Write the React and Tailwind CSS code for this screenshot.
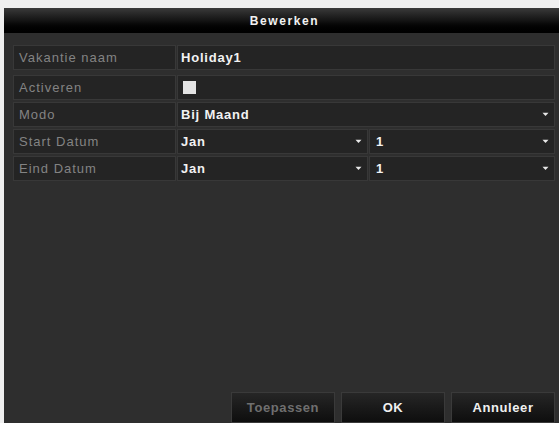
import React from "react";

const font = { fontFamily: '"Liberation Sans", Arial, sans-serif' };

function Chevron() {
  return (
    <svg width="7" height="5" viewBox="0 0 7 5" className="shrink-0">
      <path d="M0.5 0.8 L3.5 4 L6.5 0.8 Z" fill="#e8e8e8" />
    </svg>
  );
}

function Label({ children }) {
  return (
    <div className="w-[163px] shrink-0 h-full bg-[#242424] border border-[#383838] flex items-center pl-[5px] text-[13px] tracking-[1px] text-[#838383]">
      {children}
    </div>
  );
}

function Select({ value, className }) {
  return (
    <div className={"h-full bg-[#242424] border border-[#383838] flex items-center justify-between pl-[3px] pr-[5px] text-[13px] font-bold tracking-[0.8px] text-[#f2f2f2] " + className}>
      <span>{value}</span>
      <Chevron />
    </div>
  );
}

function Row({ label, children, className = "" }) {
  return (
    <div className={"h-[25px] flex gap-[1px] " + className}>
      <Label>{label}</Label>
      {children}
    </div>
  );
}

function Button({ children, disabled }) {
  return (
    <div
      className={
        "w-[104px] h-[31px] flex items-center justify-center border border-[#3a3a3a] bg-gradient-to-b from-[#262626] to-[#0e0e0e] text-[13px] font-bold tracking-[0.6px] " +
        (disabled ? "text-[#6f6f6f]" : "text-[#f0f0f0]")
      }
    >
      {children}
    </div>
  );
}

export default function App() {
  return (
    <div className="w-[559px] h-[423px] bg-[#efefef] pt-[8px] pl-[4px] flex flex-col overflow-hidden" style={font}>
      <div className="flex-1 bg-[#2e2e2e] flex flex-col">
        <div className="h-[25px] shrink-0 bg-gradient-to-b from-[#3a3a3a] via-[#141414] to-[#000] flex items-center justify-center pl-[6px] text-[12px] font-bold tracking-[1.6px] text-[#f2f2f2]">
          Bewerken
        </div>
        <div className="pt-[12px] pl-[9px] pr-[4px] flex flex-col">
          <Row label="Vakantie naam">
            <div className="flex-1 h-full bg-[#242424] border border-[#383838] flex items-center pl-[3px] text-[13px] font-bold tracking-[0.8px] text-[#f2f2f2]">
              Holiday1
            </div>
          </Row>
          <Row label="Activeren" className="mt-[5px]">
            <div className="flex-1 h-full bg-[#242424] border border-[#383838] flex items-center pl-[5px]">
              <div className="w-[13px] h-[13px] bg-[#e4e4e4]" />
            </div>
          </Row>
          <Row label="Modo" className="mt-[2px]">
            <Select value="Bij Maand" className="flex-1" />
          </Row>
          <Row label="Start Datum" className="mt-[2px]">
            <Select value="Jan" className="w-[191px]" />
            <Select value="1" className="flex-1 pl-[6px]" />
          </Row>
          <Row label="Eind Datum" className="mt-[2px]">
            <Select value="Jan" className="w-[191px]" />
            <Select value="1" className="flex-1 pl-[6px]" />
          </Row>
        </div>
        <div className="flex-1" />
        <div className="flex justify-end gap-[6px] pr-[4px]">
          <Button disabled>Toepassen</Button>
          <Button>OK</Button>
          <Button>Annuleer</Button>
        </div>
      </div>
    </div>
  );
}
